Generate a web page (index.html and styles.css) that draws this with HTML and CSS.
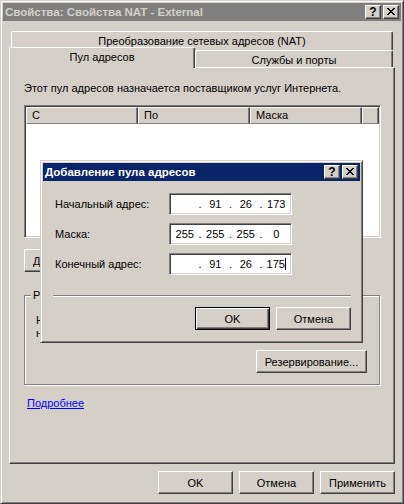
FILE: index.html
```html
<!DOCTYPE html>
<html lang="ru">
<head>
<meta charset="utf-8">
<title>Свойства NAT - External</title>
<link rel="stylesheet" href="styles.css">
</head>
<body>
<div class="window">
  <div class="titlebar inactive">
    <span class="title">Свойства: Свойства NAT - External</span>
    <div class="caps">
      <span class="cap help">?</span>
      <span class="cap"><svg class="xg" width="8" height="7" viewBox="0 0 8 7" shape-rendering="crispEdges"><path d="M0 0h2v1H0zM6 0h2v1H6zM1 1h2v1H1zM5 1h2v1H5zM2 2h4v1H2zM3 3h2v1H3zM2 4h4v1H2zM1 5h2v1H1zM5 5h2v1H5zM0 6h2v1H0zM6 6h2v1H6z" fill="#000"/></svg></span>
    </div>
  </div>
  <div class="client">
    <div class="tabs">
      <div class="tabrow row1">
        <div class="tab wide">Преобразование сетевых адресов (NAT)</div>
      </div>
      <div class="tabrow row2">
        <div class="tab sel">Пул адресов</div>
        <div class="tab other">Службы и порты</div>
      </div>
    </div>
    <div class="panel">
      <p class="intro">Этот пул адресов назначается поставщиком услуг Интернета.</p>
      <div class="list">
        <div class="lh">
          <span class="hc">С</span>
          <span class="hc">По</span>
          <span class="hc">Маска</span>
          <span class="hc fill"></span>
        </div>
      </div>
      <button class="btn add">Добавить</button>
      <div class="group">
        <span class="gtitle">Резерв</span>
        <div class="gtext">Нажмите<br>на</div>
        <div class="gactions"><button class="btn reserve">Резервирование...</button></div>
      </div>
      <a class="more" href="#">Подробнее</a>
    </div>
    <div class="footer">
      <button class="btn">OK</button>
      <button class="btn">Отмена</button>
      <button class="btn">Применить</button>
    </div>
  </div>

  <div class="dialog">
    <div class="titlebar active">
      <span class="title">Добавление пула адресов</span>
      <div class="caps">
        <span class="cap help">?</span>
        <span class="cap"><svg class="xg" width="8" height="7" viewBox="0 0 8 7" shape-rendering="crispEdges"><path d="M0 0h2v1H0zM6 0h2v1H6zM1 1h2v1H1zM5 1h2v1H5zM2 2h4v1H2zM3 3h2v1H3zM2 4h4v1H2zM1 5h2v1H1zM5 5h2v1H5zM0 6h2v1H0zM6 6h2v1H6z" fill="#000"/></svg></span>
      </div>
    </div>
    <div class="dbody">
      <div class="frow">
        <span class="flabel">Начальный адрес:</span>
        <div class="ip"><span class="seg"></span><span class="dot">.</span><span class="seg">91</span><span class="dot">.</span><span class="seg">26</span><span class="dot">.</span><span class="seg">173</span></div>
      </div>
      <div class="frow">
        <span class="flabel">Маска:</span>
        <div class="ip"><span class="seg">255</span><span class="dot">.</span><span class="seg">255</span><span class="dot">.</span><span class="seg">255</span><span class="dot">.</span><span class="seg">0</span></div>
      </div>
      <div class="frow">
        <span class="flabel">Конечный адрес:</span>
        <div class="ip"><span class="seg"></span><span class="dot">.</span><span class="seg">91</span><span class="dot">.</span><span class="seg">26</span><span class="dot">.</span><span class="seg">175<span class="caret"></span></span></div>
      </div>
      <div class="sep"></div>
      <div class="dactions">
        <button class="btn def">OK</button>
        <button class="btn">Отмена</button>
      </div>
    </div>
  </div>
</div>
</body>
</html>
```

FILE: styles.css
```css
html, body {
  margin: 0;
  padding: 0;
}
body {
  width: 404px;
  height: 504px;
  overflow: hidden;
  background: #d4d0c8;
  font-family: "Liberation Sans", Arial, sans-serif;
  font-size: 11px;
  color: #000;
}

.window {
  position: relative;
  box-sizing: border-box;
  width: 404px;
  height: 504px;
  border: 1px solid;
  border-color: #d4d0c8 #404040 #404040 #d4d0c8;
  box-shadow: inset 1px 1px #fff, inset -1px -1px #808080;
  padding: 2px;
}

/* title bars */
.titlebar {
  display: flex;
  align-items: center;
  height: 18px;
  padding-left: 2px;
  font-weight: bold;
  font-size: 11.5px;
}
.titlebar.inactive {
  background: #808080;
  color: #d4d0c8;
}
.titlebar.active {
  background: #0a246a;
  color: #fff;
}
.title {
  white-space: nowrap;
}
.caps {
  margin-left: auto;
  margin-right: 2px;
  display: flex;
  gap: 2px;
}
.cap {
  box-sizing: border-box;
  width: 16px;
  height: 14px;
  background: #d4d0c8;
  border: 1px solid;
  border-color: #fff #404040 #404040 #fff;
  box-shadow: inset -1px -1px #808080;
  display: flex;
  align-items: center;
  justify-content: center;
  color: #000;
}
.cap.help {
  font-size: 12px;
  font-weight: bold;
  line-height: 12px;
  padding-bottom: 1px;
}
.xg {
  display: block;
  margin-top: -1px;
}

/* client area */
.client {
  padding: 8px 6px 0 6px;
}

/* tabs */
.tabs {
  position: relative;
  z-index: 1;
}
.tabrow {
  display: flex;
  align-items: flex-start;
  height: 19px;
}
.tab {
  box-sizing: border-box;
  background: #d4d0c8;
  border-left: 1px solid #fff;
  border-top: 1px solid #fff;
  border-right: 1px solid #404040;
  box-shadow: inset -1px 0 #808080;
  border-radius: 2px 2px 0 0;
  text-align: center;
  line-height: 13px;
  padding-top: 3px;
  white-space: nowrap;
}
.tab.wide {
  margin-left: 2px;
  margin-top: 2px;
  width: 382px;
  height: 19px;
}
.tab.sel {
  margin-top: -1px;
  width: 186px;
  height: 21px;
}
.tab.other {
  margin-top: 2px;
  width: 198px;
  height: 17px;
}

/* tab panel */
.panel {
  box-sizing: border-box;
  width: 386px;
  height: 397px;
  border: 1px solid;
  border-color: #fff #404040 #404040 #fff;
  box-shadow: inset -1px -1px #808080;
  padding: 14px 13px 0 14px;
}
.intro {
  margin: 0;
  line-height: 13px;
  white-space: nowrap;
}

/* list view */
.list {
  box-sizing: border-box;
  margin-top: 10px;
  width: 357px;
  height: 133px;
  background: #fff;
  border: 1px solid;
  border-color: #808080 #fff #fff #808080;
  box-shadow: inset 1px 1px #404040, inset -1px -1px #d4d0c8;
  padding: 1px;
}
.lh {
  display: flex;
  height: 17px;
}
.hc {
  box-sizing: border-box;
  width: 112px;
  height: 17px;
  background: #d4d0c8;
  border: 1px solid;
  border-color: #fff #404040 #808080 #fff;
  box-shadow: inset -1px 0 #808080;
  padding-left: 5px;
  line-height: 15px;
}
.hc.fill {
  flex: 1;
  width: auto;
}

/* buttons */
.btn {
  box-sizing: border-box;
  width: 75px;
  height: 23px;
  margin: 0;
  padding: 0;
  background: #d4d0c8;
  border: 1px solid;
  border-color: #fff #404040 #404040 #fff;
  box-shadow: inset -1px -1px #808080;
  font: inherit;
  color: #000;
  display: flex;
  align-items: center;
  justify-content: center;
  border-radius: 0;
}
.btn.def {
  border-color: #000;
  box-shadow: inset 1px 1px #fff, inset -1px -1px #404040, inset -2px -2px #808080;
}
.add {
  margin-top: 11px;
  justify-content: flex-start;
  padding-left: 8px;
}
.reserve {
  width: 111px;
}

/* group box */
.group {
  box-sizing: border-box;
  margin-top: 23px;
  width: 356px;
  height: 90px;
  border: 1px solid #808080;
  box-shadow: 1px 1px #fff, inset 1px 1px #fff;
  padding: 0 12px 0 11px;
}
.gtitle {
  display: table;
  margin: -7px 0 0 -5px;
  padding: 0 2px;
  background: #d4d0c8;
  line-height: 13px;
}
.gtext {
  margin-top: 12px;
  line-height: 13px;
  white-space: nowrap;
}
.gactions {
  display: flex;
  justify-content: flex-end;
  margin-top: 10px;
}

.more {
  display: inline-block;
  margin: 12px 0 0 3px;
  color: #0000ff;
  text-decoration: underline;
  line-height: 13px;
}

.footer {
  display: flex;
  justify-content: flex-end;
  gap: 6px;
  margin-top: 7px;
}

/* modal dialog */
.dialog {
  position: absolute;
  left: 39px;
  top: 159px;
  z-index: 5;
  box-sizing: border-box;
  width: 323px;
  height: 183px;
  background: #d4d0c8;
  border: 1px solid;
  border-color: #d4d0c8 #404040 #404040 #d4d0c8;
  box-shadow: inset 1px 1px #fff, inset -1px -1px #808080;
  padding: 2px;
}
.dbody {
  padding: 12px 0 0 0;
}
.frow {
  display: flex;
  align-items: center;
  height: 22px;
  padding-left: 12px;
}
.frow + .frow {
  margin-top: 8px;
}
.flabel {
  width: 114px;
  white-space: nowrap;
}
.ip {
  box-sizing: border-box;
  width: 123px;
  height: 22px;
  background: #fff;
  border: 1px solid;
  border-color: #808080 #fff #fff #808080;
  box-shadow: inset 1px 1px #404040, inset -1px -1px #d4d0c8;
  padding: 0 1px;
  display: flex;
  align-items: center;
  line-height: 13px;
}
.seg {
  flex: 1;
  text-align: center;
  white-space: nowrap;
}
.dot {
  width: 3px;
  text-align: center;
}
.caret {
  display: inline-block;
  width: 1px;
  height: 12px;
  background: #000;
  vertical-align: -2px;
}
.sep {
  margin: 20px 9px 0 10px;
  height: 0;
  border-top: 1px solid #808080;
  border-bottom: 1px solid #fff;
}
.dactions {
  display: flex;
  justify-content: flex-end;
  gap: 6px;
  margin: 10px 9px 0 0;
}
```
